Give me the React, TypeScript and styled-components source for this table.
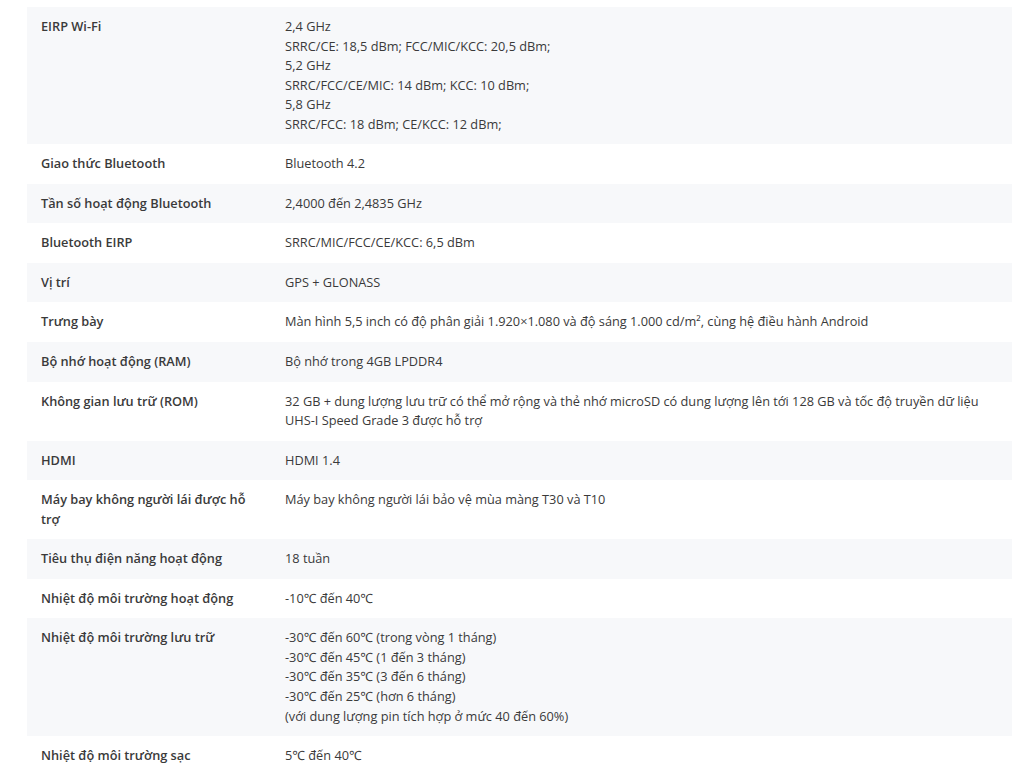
import styled, { createGlobalStyle } from "styled-components";

const GlobalStyle = createGlobalStyle`
  body {
    margin: 0;
    background: #ffffff;
    font-family: "Open Sans", "Noto Sans", sans-serif;
  }
`;

const Page = styled.div`
  padding: 7px 12px 0 27px;
`;

const SpecTable = styled.table`
  width: 100%;
  border-collapse: collapse;
  font-size: 12.75px;
  line-height: 19.55px;
  color: #3a3a3a;
`;

const SpecRow = styled.tr`
  &:nth-child(odd) {
    background-color: #f7f8fa;
  }
`;

const LabelCell = styled.td`
  width: 244px;
  box-sizing: border-box;
  padding: 10px 14px;
  font-weight: 600;
  vertical-align: top;
`;

const ValueCell = styled.td`
  padding: 10px 14px;
  vertical-align: top;
`;

const specs: Array<{ label: string; value: string[] }> = [
  {
    label: "EIRP Wi-Fi",
    value: [
      "2,4 GHz",
      "SRRC/CE: 18,5 dBm; FCC/MIC/KCC: 20,5 dBm;",
      "5,2 GHz",
      "SRRC/FCC/CE/MIC: 14 dBm; KCC: 10 dBm;",
      "5,8 GHz",
      "SRRC/FCC: 18 dBm; CE/KCC: 12 dBm;",
    ],
  },
  { label: "Giao thức Bluetooth", value: ["Bluetooth 4.2"] },
  { label: "Tần số hoạt động Bluetooth", value: ["2,4000 đến 2,4835 GHz"] },
  { label: "Bluetooth EIRP", value: ["SRRC/MIC/FCC/CE/KCC: 6,5 dBm"] },
  { label: "Vị trí", value: ["GPS + GLONASS"] },
  {
    label: "Trưng bày",
    value: [
      "Màn hình 5,5 inch có độ phân giải 1.920×1.080 và độ sáng 1.000 cd/m², cùng hệ điều hành Android",
    ],
  },
  { label: "Bộ nhớ hoạt động (RAM)", value: ["Bộ nhớ trong 4GB LPDDR4"] },
  {
    label: "Không gian lưu trữ (ROM)",
    value: [
      "32 GB + dung lượng lưu trữ có thể mở rộng và thẻ nhớ microSD có dung lượng lên tới 128 GB và tốc độ truyền dữ liệu UHS-I Speed Grade 3 được hỗ trợ",
    ],
  },
  { label: "HDMI", value: ["HDMI 1.4"] },
  {
    label: "Máy bay không người lái được hỗ trợ",
    value: ["Máy bay không người lái bảo vệ mùa màng T30 và T10"],
  },
  { label: "Tiêu thụ điện năng hoạt động", value: ["18 tuần"] },
  { label: "Nhiệt độ môi trường hoạt động", value: ["-10℃ đến 40℃"] },
  {
    label: "Nhiệt độ môi trường lưu trữ",
    value: [
      "-30℃ đến 60℃ (trong vòng 1 tháng)",
      "-30℃ đến 45℃ (1 đến 3 tháng)",
      "-30℃ đến 35℃ (3 đến 6 tháng)",
      "-30℃ đến 25℃ (hơn 6 tháng)",
      "(với dung lượng pin tích hợp ở mức 40 đến 60%)",
    ],
  },
  { label: "Nhiệt độ môi trường sạc", value: ["5℃ đến 40℃"] },
];

const App = () => {
  return (
    <>
      <GlobalStyle />
      <Page>
        <SpecTable>
          <tbody>
            {specs.map((spec, index) => (
              <SpecRow key={index}>
                <LabelCell>{spec.label}</LabelCell>
                <ValueCell>
                  {spec.value.map((line, i) => (
                    <span key={i}>
                      {i > 0 && <br />}
                      {line}
                    </span>
                  ))}
                </ValueCell>
              </SpecRow>
            ))}
          </tbody>
        </SpecTable>
      </Page>
    </>
  );
};

export default App;
